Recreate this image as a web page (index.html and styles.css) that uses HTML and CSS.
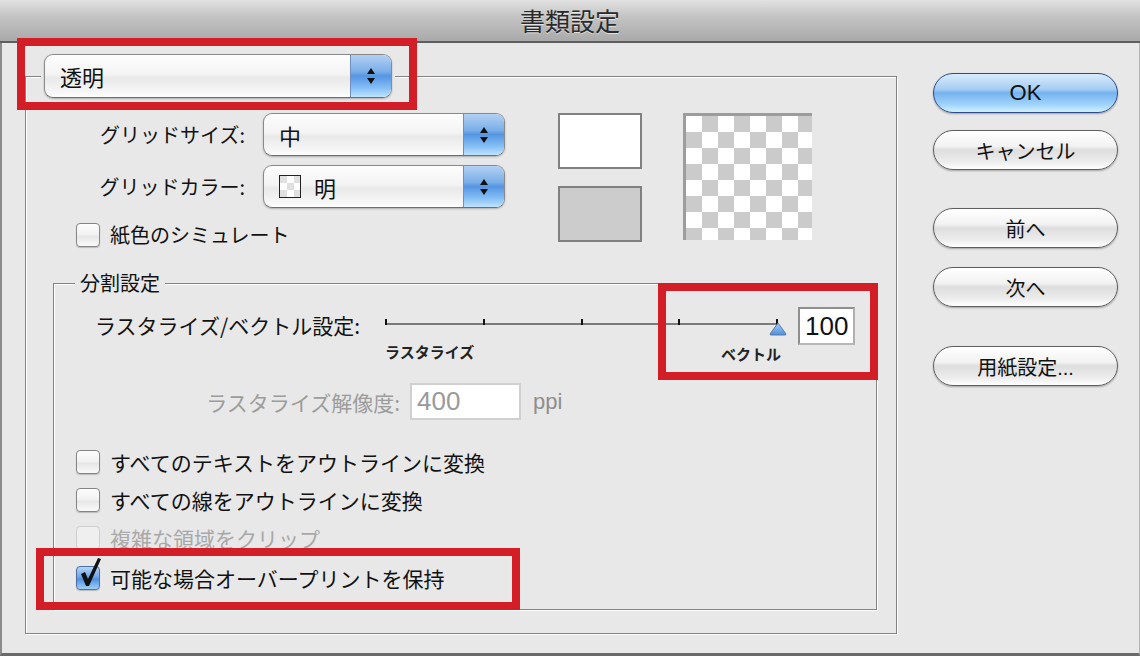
FILE: index.html
```html
<!DOCTYPE html>
<html lang="ja">
<head>
  <meta charset="UTF-8" />
  <title>書類設定</title>
  <link rel="stylesheet" href="styles.css">
</head>
<body>
  <div class="window">
    <!-- タイトルバー -->
    <div class="titlebar">書類設定</div>

    <div class="dialog">
      <!-- 左側：設定パネル -->
      <div class="main">
        <div class="panel">
          <div class="panel-head">
            <div class="popup popup-wide">
              <span class="popup-text">透明</span>
              <span class="popup-arrows"><i class="up"></i><i class="down"></i></span>
            </div>
          </div>

          <div class="top-section">
            <div class="grid-opts">
              <span class="opt-label">グリッドサイズ:</span>
              <div class="popup popup-mid">
                <span class="popup-text">中</span>
                <span class="popup-arrows"><i class="up"></i><i class="down"></i></span>
              </div>
              <span class="opt-label">グリッドカラー:</span>
              <div class="popup popup-mid">
                <span class="popup-text"><span class="color-icon"></span>明</span>
                <span class="popup-arrows"><i class="up"></i><i class="down"></i></span>
              </div>
              <div class="check-row paper-row">
                <span class="checkbox"></span>
                <span>紙色のシミュレート</span>
              </div>
            </div>
            <div class="swatches">
              <div class="swatch swatch-white"></div>
              <div class="swatch swatch-gray"></div>
            </div>
            <div class="preview"></div>
          </div>

          <!-- 分割設定 -->
          <div class="group">
            <div class="group-legend">分割設定</div>

            <div class="slider-row">
              <span class="slider-label">ラスタライズ/ベクトル設定:</span>
              <div class="slider">
                <div class="track">
                  <i class="tick"></i><i class="tick"></i><i class="tick"></i><i class="tick"></i><i class="tick"></i>
                </div>
                <div class="tick-labels">
                  <span>ラスタライズ</span>
                  <span>ベクトル</span>
                </div>
                <svg class="thumb" width="18" height="14" viewBox="0 0 18 14">
                  <defs>
                    <linearGradient id="thumbFill" x1="0" y1="0" x2="0" y2="1">
                      <stop offset="0" stop-color="#a9cdf4"/>
                      <stop offset="1" stop-color="#4d8fdc"/>
                    </linearGradient>
                  </defs>
                  <path d="M9 1 L17 12 Q17 13 16 13 L2 13 Q1 13 1 12 Z" fill="url(#thumbFill)" stroke="#5b79a8" stroke-width="1"/>
                </svg>
              </div>
              <div class="field field-value">100</div>
            </div>

            <div class="res-row">
              <span class="res-label">ラスタライズ解像度:</span>
              <div class="field field-disabled">400</div>
              <span class="unit">ppi</span>
            </div>

            <div class="check-list">
              <div class="check-row">
                <span class="checkbox"></span>
                <span>すべてのテキストをアウトラインに変換</span>
              </div>
              <div class="check-row">
                <span class="checkbox"></span>
                <span>すべての線をアウトラインに変換</span>
              </div>
              <div class="check-row disabled">
                <span class="checkbox"></span>
                <span>複雑な領域をクリップ</span>
              </div>
              <div class="check-row">
                <span class="checkbox checked">
                  <svg class="checkmark" width="26" height="30" viewBox="0 0 26 30">
                    <path d="M3 16 L7 14 L10 21 L20 0 L23 1 L11 28 L8 28 Z" fill="#111"/>
                  </svg>
                </span>
                <span>可能な場合オーバープリントを保持</span>
              </div>
            </div>
          </div>
        </div>
      </div>

      <!-- 右側：ボタン -->
      <div class="buttons">
        <button class="btn btn-default">OK</button>
        <button class="btn btn-cancel">キャンセル</button>
        <button class="btn btn-prev">前へ</button>
        <button class="btn btn-next">次へ</button>
        <button class="btn btn-page">用紙設定...</button>
      </div>
    </div>

    <!-- 赤い注釈枠 -->
    <div class="mark mark-popup"></div>
    <div class="mark mark-slider"></div>
    <div class="mark mark-check"></div>
  </div>
</body>
</html>
```

FILE: styles.css
```css
/*――――――――――――――――――――――――――――
  全体
――――――――――――――――――――――――――――*/
body {
  margin: 0;
  background: #e8e8e8;
  font-family: "Noto Sans CJK JP", "Noto Sans", sans-serif;
  color: #111;
}
.window {
  position: relative;
  width: 1140px;
  height: 656px;
  overflow: hidden;
  background: #e8e8e8;
}

/*――――――――――――――――――――――――――――
  タイトルバー
――――――――――――――――――――――――――――*/
.titlebar {
  height: 41px;
  border-bottom: 2px solid #5e5e5e;
  background: linear-gradient(#e2e2e2, #c4c4c4 40%, #a9a9a9);
  text-align: center;
  font-size: 25px;
  line-height: 41px;
  color: #2a2a2a;
  text-shadow: 0 1px 0 rgba(255,255,255,0.6);
}

/*――――――――――――――――――――――――――――
  ダイアログ本体
――――――――――――――――――――――――――――*/
.dialog {
  display: flex;
  height: 613px;
  box-sizing: border-box;
  border-left: 2px solid #8b8b8b;
  border-right: 1px solid #b5b5b5;
  border-bottom: 3px solid #6a6a6a;
}
.main {
  padding: 33px 0 0 23px;
}
.panel {
  display: flex;
  flex-direction: column;
  width: 872px;
  height: 558px;
  box-sizing: border-box;
  border: 1px solid #838383;
  box-shadow: 1px 1px 0 #fff, inset 1px 1px 0 #fff;
  padding: 0 19px 23px 27px;
}
.panel-head {
  align-self: flex-start;
  margin: -23px 0 0 -12px;
  padding: 0 3px;
  background: #e8e8e8;
}

/*――――――――――――――――――――――――――――
  ポップアップメニュー（Aqua 風）
――――――――――――――――――――――――――――*/
.popup {
  display: flex;
  box-sizing: border-box;
  border: 1px solid #8a8a8a;
  border-bottom-color: #6e6e6e;
  border-radius: 9px;
  background: linear-gradient(#fdfdfd, #f4f4f4 45%, #e9e9e9 55%, #f7f7f7 90%, #fff);
  box-shadow: 0 1px 2px rgba(0,0,0,0.25);
  overflow: hidden;
}
.popup-wide {
  width: 348px;
  height: 44px;
}
.popup-mid {
  width: 242px;
  height: 43px;
}
.popup-text {
  flex: 1;
  display: flex;
  align-items: center;
  padding-left: 15px;
  font-size: 22px;
}
.popup-arrows {
  width: 40px;
  display: flex;
  flex-direction: column;
  align-items: center;
  justify-content: center;
  gap: 4px;
  border-left: 1px solid #6f8fc0;
  background: linear-gradient(#b3d0f3, #7aaee9 40%, #5595e2 50%, #88c1f6 80%, #bfe4ff);
}
.popup-arrows i {
  width: 0;
  height: 0;
  border-left: 4px solid transparent;
  border-right: 4px solid transparent;
}
.popup-arrows .up {
  border-bottom: 6px solid #111;
}
.popup-arrows .down {
  border-top: 6px solid #111;
}
.color-icon {
  width: 22px;
  height: 23px;
  box-sizing: border-box;
  margin-right: 13px;
  border: 1px solid #222;
  background: repeating-conic-gradient(#fff 0 25%, #e0e0e0 0 50%) 0 0 / 14px 14px;
}

/*――――――――――――――――――――――――――――
  上段：グリッド設定・色見本・プレビュー
――――――――――――――――――――――――――――*/
.top-section {
  display: flex;
  align-items: flex-start;
  margin-top: 15px;
  padding-left: 23px;
}
.grid-opts {
  display: grid;
  grid-template-columns: 169px 242px;
  column-gap: 18px;
  row-gap: 9px;
  align-items: center;
}
.opt-label {
  text-align: right;
  font-size: 20px;
  line-height: 24px;
}
.swatches {
  display: flex;
  flex-direction: column;
  gap: 17px;
  margin-left: 53px;
}
.swatch {
  width: 84px;
  height: 56px;
  box-sizing: border-box;
  border: 2px solid #808080;
}
.swatch-white {
  background: #fff;
}
.swatch-gray {
  background: #cccccc;
}
.preview {
  width: 129px;
  height: 127px;
  box-sizing: border-box;
  margin-left: 41px;
  border-top: 3px solid #9c9c9c;
  border-left: 3px solid #9c9c9c;
  background: repeating-conic-gradient(#cbcbcb 0 25%, #fff 0 50%) 0 0 / 32px 32px;
}

/*――――――――――――――――――――――――――――
  分割設定グループ
――――――――――――――――――――――――――――*/
.group {
  flex: 1;
  display: flex;
  flex-direction: column;
  margin-top: 36px;
  border: 1px solid #838383;
  box-shadow: 1px 1px 0 #fff, inset 1px 1px 0 #fff;
  padding-left: 22px;
}
.group-legend {
  align-self: flex-start;
  margin: -13px 0 0 -1px;
  padding: 0 5px;
  background: #e8e8e8;
  font-size: 20px;
  line-height: 24px;
}

/* スライダー行 */
.slider-row {
  display: flex;
  align-items: flex-start;
  margin: 12px 0 0 19px;
  height: 56px;
}
.slider-label {
  width: 285px;
  margin-top: 6px;
  font-size: 21px;
  line-height: 24px;
}
.slider {
  position: relative;
  width: 403px;
}
.track {
  display: flex;
  justify-content: space-between;
  width: 393px;
  height: 2px;
  margin: 16px 0 0 5px;
  background: #7b7b7b;
}
.tick {
  width: 2px;
  height: 6px;
  margin-top: -4px;
  background: #111;
}
.tick-labels {
  display: flex;
  justify-content: space-between;
  width: 396px;
  margin: 19px 0 0 5px;
  font-size: 15px;
  font-weight: bold;
  line-height: 16px;
  color: #222;
}
.tick-labels span:last-child {
  margin-top: 2px;
}
.thumb {
  position: absolute;
  left: 389px;
  top: 15px;
}

/* 数値フィールド */
.field {
  box-sizing: border-box;
  background: #fff;
  font-family: "Liberation Sans", "DejaVu Sans", sans-serif;
  font-size: 26px;
  padding-left: 5px;
}
.field-value {
  width: 57px;
  height: 38px;
  margin-left: 15px;
  line-height: 34px;
  border: 2px solid #8f8f8f;
  border-bottom-color: #b8b8b8;
  border-right-color: #b0b0b0;
  color: #111;
}
.field-disabled {
  width: 111px;
  height: 37px;
  margin-left: 10px;
  line-height: 33px;
  border: 2px solid #d0d0d0;
  color: #9a9a9a;
}

/* 解像度行 */
.res-row {
  display: flex;
  align-items: center;
  margin-top: 20px;
}
.res-label {
  width: 324px;
  text-align: right;
  font-size: 21px;
  line-height: 24px;
  color: #9c9c9c;
}
.unit {
  margin-left: 12px;
  font-family: "Liberation Sans", "DejaVu Sans", sans-serif;
  font-size: 22px;
  color: #8e8e8e;
}

/*――――――――――――――――――――――――――――
  チェックボックス
――――――――――――――――――――――――――――*/
.check-list {
  margin-top: 23px;
}
.check-row {
  display: flex;
  align-items: center;
  gap: 10px;
  height: 38px;
  font-size: 21px;
}
.check-list .check-row:last-child {
  margin-top: 2px;
}
.grid-opts .paper-row {
  grid-column: 1 / -1;
  height: 25px;
  margin-top: 5px;
  font-size: 20px;
}
.checkbox {
  position: relative;
  width: 24px;
  height: 24px;
  box-sizing: border-box;
  border: 1px solid #858585;
  border-radius: 4px;
  background: linear-gradient(#fdfdfd, #f1f1f1 50%, #e6e6e6 55%, #fafafa);
  box-shadow: 0 1px 1px rgba(0,0,0,0.2);
}
.disabled {
  color: #a8a8a8;
}
.disabled .checkbox {
  border-color: #cfcfcf;
  box-shadow: none;
  background: #efefef;
}
.checked {
  border-color: #4c6fa6;
  background: linear-gradient(#b6d4f5, #6ea6e8 45%, #4f90df 55%, #9fd0fb);
}
.checkmark {
  position: absolute;
  left: 1px;
  top: -9px;
}

/*――――――――――――――――――――――――――――
  右側ボタン
――――――――――――――――――――――――――――*/
.buttons {
  display: flex;
  flex-direction: column;
  padding: 30px 0 0 36px;
}
.btn {
  width: 185px;
  height: 40px;
  border: 1px solid #5e5e5e;
  border-radius: 20px;
  background: linear-gradient(#ffffff, #f2f2f2 40%, #dedede 50%, #ececec 80%, #ffffff);
  box-shadow: 0 1px 2px rgba(0,0,0,0.3);
  font-family: "Liberation Sans", "Noto Sans CJK JP", sans-serif;
  font-size: 20px;
  color: #111;
  padding: 0;
}
.btn-default {
  border-color: #2c4a8c;
  background: linear-gradient(#d9ebfc, #a5cdf3 40%, #75b2ee 50%, #9fd3fb 80%, #d3f0ff);
  font-size: 22px;
}
.btn-cancel {
  margin-top: 17px;
}
.btn-prev {
  margin-top: 38px;
}
.btn-next {
  margin-top: 19px;
}
.btn-page {
  margin-top: 39px;
}

/*――――――――――――――――――――――――――――
  赤い注釈枠
――――――――――――――――――――――――――――*/
.mark {
  position: absolute;
  box-sizing: border-box;
  border: 8px solid #d41e27;
}
.mark-popup {
  left: 17px;
  top: 38px;
  width: 400px;
  height: 72px;
}
.mark-slider {
  left: 658px;
  top: 283px;
  width: 220px;
  height: 97px;
}
.mark-check {
  left: 36px;
  top: 548px;
  width: 484px;
  height: 62px;
}
```
